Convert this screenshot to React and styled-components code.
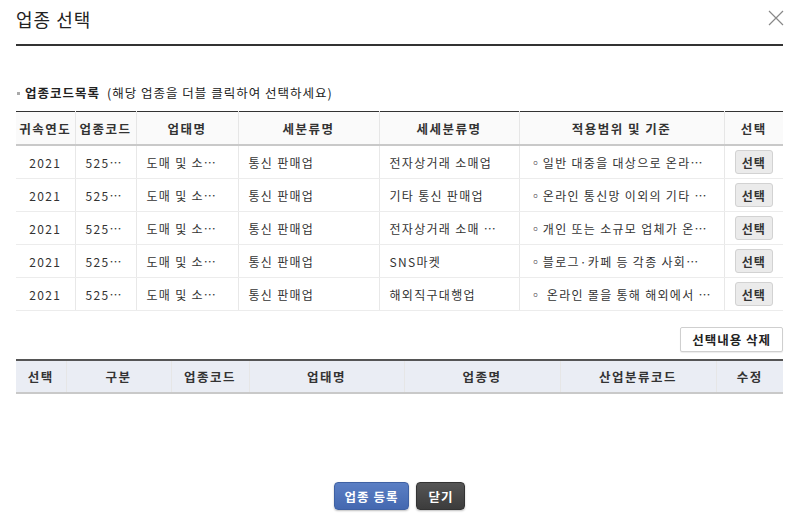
import styled, { createGlobalStyle } from "styled-components";

const GlobalStyle = createGlobalStyle`
  html, body {
    margin: 0;
    padding: 0;
    background: #fff;
  }
  body {
    font-family: "Noto Sans CJK KR", "Noto Sans", sans-serif;
    color: #333;
  }
`;

const Modal = styled.div`
  width: 800px;
  height: 527px;
  box-sizing: border-box;
  padding: 0 17px 0 16px;
  display: flex;
  flex-direction: column;
`;

const Header = styled.div`
  height: 44px;
  display: flex;
  align-items: center;
  justify-content: space-between;
  border-bottom: 2px solid #333;
`;

const Title = styled.h1`
  margin: 0;
  font-size: 18px;
  font-weight: 400;
  letter-spacing: 1px;
  color: #222;
  line-height: 1;
  padding-bottom: 6px;
`;

const CloseButton = styled.button`
  border: none;
  background: transparent;
  padding: 0;
  margin-right: -2px;
  width: 18px;
  height: 18px;
  margin-bottom: 8px;
  cursor: pointer;
`;

const SectionLabel = styled.div`
  margin-top: 38px;
  display: flex;
  align-items: center;
  font-size: 12.5px;
  letter-spacing: 1px;
  line-height: 18px;
  color: #222;
  &::before {
    content: "";
    width: 3px;
    height: 3px;
    background: #aaa;
    margin: 0 5px 0 1px;
  }
  strong {
    font-weight: 700;
    margin-right: 7px;
  }
`;

const Table = styled.table`
  width: 100%;
  border-collapse: collapse;
  table-layout: fixed;
  font-size: 12px;
  margin-top: ${(p) => p.$top || 0}px;
  border-top: ${(p) => (p.$strong ? "2px solid #555" : "1px solid #333")};
`;

const HeadCell = styled.th`
  height: ${(p) => p.$h || 32}px;
  padding: 0;
  font-size: 12.5px;
  font-weight: 700;
  letter-spacing: 1.5px;
  color: #333;
  background: ${(p) => p.$bg || "#fafafa"};
  border-left: 1px solid #e6e6e6;
  border-bottom: 2px solid #c9c9c9;
  text-align: center;
  white-space: nowrap;
  &:first-child {
    border-left: none;
  }
`;

const Cell = styled.td`
  height: 32px;
  padding: 0 ${(p) => (p.$center ? 10 : 13)}px 0 10px;
  border-left: 1px solid #e8e8e8;
  border-bottom: 1px solid #ececec;
  text-align: ${(p) => (p.$center ? "center" : "left")};
  white-space: nowrap;
  overflow: hidden;
  text-overflow: ellipsis;
  letter-spacing: 1.3px;
  color: #333;
  &:first-child {
    border-left: none;
  }
`;

const PickButton = styled.button`
  width: 38px;
  height: 24px;
  padding: 0;
  border: 1px solid #d2d2d2;
  border-radius: 3px;
  background: #ebebeb;
  font-family: inherit;
  font-size: 12px;
  font-weight: 700;
  letter-spacing: 1px;
  color: #333;
  cursor: pointer;
`;

const ToolRow = styled.div`
  display: flex;
  justify-content: flex-end;
  margin-top: 16px;
`;

const DeleteButton = styled.button`
  height: 25px;
  padding: 0 11px;
  border: 1px solid #cfcfcf;
  border-radius: 2px;
  background: #fff;
  box-shadow: 0 1px 1px rgba(0, 0, 0, 0.08);
  font-family: inherit;
  font-size: 12.5px;
  font-weight: 700;
  letter-spacing: 1px;
  color: #222;
  cursor: pointer;
`;

const Footer = styled.div`
  margin-top: auto;
  margin-bottom: 17px;
  display: flex;
  justify-content: center;
  gap: 7px;
`;

const FooterButton = styled.button`
  height: 28px;
  padding: 0 ${(p) => (p.$primary ? 10 : 11)}px;
  border: 1px solid ${(p) => (p.$primary ? "#3f61a3" : "#333")};
  border-radius: 4px;
  background: ${(p) =>
    p.$primary
      ? "linear-gradient(#5b7fc4, #4468b0)"
      : "linear-gradient(#555, #3c3c3c)"};
  box-shadow: 0 1px 2px rgba(0, 0, 0, 0.25);
  color: #fff;
  font-family: inherit;
  font-size: 12.5px;
  font-weight: 700;
  letter-spacing: 1px;
  cursor: pointer;
`;

const codeCols = [59, 61, 102, 141, 140, 205, 59];
const codeHeads = ["귀속연도", "업종코드", "업태명", "세분류명", "세세분류명", "적용범위 및 기준", "선택"];

const rows = [
  ["2021", "525101", "도매 및 소매업", "통신 판매업", "전자상거래 소매업", "◦일반 대중을 대상으로 온라인 통신망을 통하여"],
  ["2021", "525102", "도매 및 소매업", "통신 판매업", "기타 통신 판매업", "◦온라인 통신망 이외의 기타 통신 수단"],
  ["2021", "525103", "도매 및 소매업", "통신 판매업", "전자상거래 소매 중개업", "◦개인 또는 소규모 업체가 온라인 통신망"],
  ["2021", "525104", "도매 및 소매업", "통신 판매업", "SNS마켓", "◦블로그·카페 등 각종 사회관계망서비스"],
  ["2021", "525105", "도매 및 소매업", "통신 판매업", "해외직구대행업", "◦ 온라인 몰을 통해 해외에서 구매"],
];

const pickCols = [50, 105, 78, 155, 156, 156, 67];
const pickHeads = ["선택", "구분", "업종코드", "업태명", "업종명", "산업분류코드", "수정"];

const CloseIcon = () => (
  <svg width="18" height="18" viewBox="0 0 18 18">
    <path d="M2 2 L16 16 M16 2 L2 16" stroke="#888" strokeWidth="1.2" fill="none" />
  </svg>
);

const App = () => {
  return (
    <>
      <GlobalStyle />
      <Modal>
        <Header>
          <Title>업종 선택</Title>
          <CloseButton aria-label="닫기">
            <CloseIcon />
          </CloseButton>
        </Header>

        <SectionLabel>
          <strong>업종코드목록</strong>(해당 업종을 더블 클릭하여 선택하세요)
        </SectionLabel>

        <Table $top={9}>
          <colgroup>
            {codeCols.map((w, i) => (
              <col key={i} style={{ width: w }} />
            ))}
          </colgroup>
          <thead>
            <tr>
              {codeHeads.map((h) => (
                <HeadCell key={h}>{h}</HeadCell>
              ))}
            </tr>
          </thead>
          <tbody>
            {rows.map((r, i) => (
              <tr key={i}>
                <Cell $center>{r[0]}</Cell>
                <Cell>{r[1]}</Cell>
                <Cell>{r[2]}</Cell>
                <Cell>{r[3]}</Cell>
                <Cell>{r[4]}</Cell>
                <Cell>{r[5]}</Cell>
                <Cell $center>
                  <PickButton>선택</PickButton>
                </Cell>
              </tr>
            ))}
          </tbody>
        </Table>

        <ToolRow>
          <DeleteButton>선택내용 삭제</DeleteButton>
        </ToolRow>

        <Table $top={7} $strong>
          <colgroup>
            {pickCols.map((w, i) => (
              <col key={i} style={{ width: w }} />
            ))}
          </colgroup>
          <thead>
            <tr>
              {pickHeads.map((h) => (
                <HeadCell key={h} $bg="#eaedf4" $h={31}>
                  {h}
                </HeadCell>
              ))}
            </tr>
          </thead>
          <tbody />
        </Table>

        <Footer>
          <FooterButton $primary>업종 등록</FooterButton>
          <FooterButton>닫기</FooterButton>
        </Footer>
      </Modal>
    </>
  );
};

export default App;
